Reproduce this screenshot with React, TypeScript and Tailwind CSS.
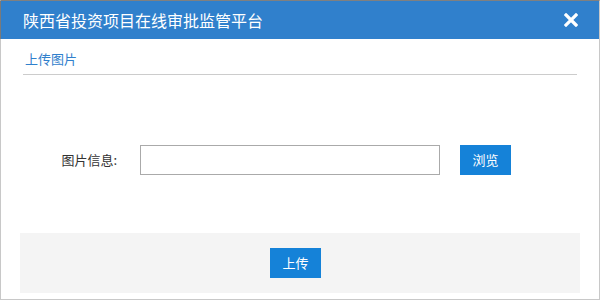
const cjk = { fontFamily: '"Microsoft YaHei", "Noto Sans CJK SC", "Noto Sans", sans-serif' };

function CloseIcon() {
  return (
    <svg width="14" height="14" viewBox="0 0 14 14" className="block">
      <path d="M2 2 L12 12 M12 2 L2 12" stroke="#ffffff" strokeWidth="3.2" strokeLinecap="square" />
    </svg>
  );
}

export default function App() {
  return (
    <div className="w-[600px] h-[300px] bg-white border border-[#c8c8c8] border-t-[#808080] flex flex-col" style={cjk}>
      <div className="h-[38px] bg-[#3080cc] flex items-center justify-between pl-[22px] pr-[21px] border-l border-l-[#7a7a7a] -ml-px">
        <span className="text-white text-[16px] leading-none">陕西省投资项目在线审批监管平台</span>
        <button className="cursor-pointer">
          <CloseIcon />
        </button>
      </div>

      <div className="mx-[22px] pt-[10px] pb-[5px] border-b border-[#cccccc] text-[13px] leading-[20px] text-[#3080cc]">
        <span className="ml-[2px]">上传图片</span>
      </div>

      <div className="flex items-center mt-[70px]">
        <div className="w-[116px] text-right text-[13px] text-[#333333]">图片信息:</div>
        <input className="ml-[23px] w-[300px] h-[30px] border border-[#aaaaaa] outline-none px-2 text-[13px]" />
        <button className="ml-[20px] w-[51px] h-[30px] bg-[#1582d8] text-white text-[13px]">浏览</button>
      </div>

      <div className="mt-[58px] ml-[19px] w-[560px] h-[60px] bg-[#f4f4f4] flex items-center justify-center pr-[9px]">
        <button className="w-[51px] h-[30px] bg-[#1582d8] text-white text-[13px]">上传</button>
      </div>
    </div>
  );
}
